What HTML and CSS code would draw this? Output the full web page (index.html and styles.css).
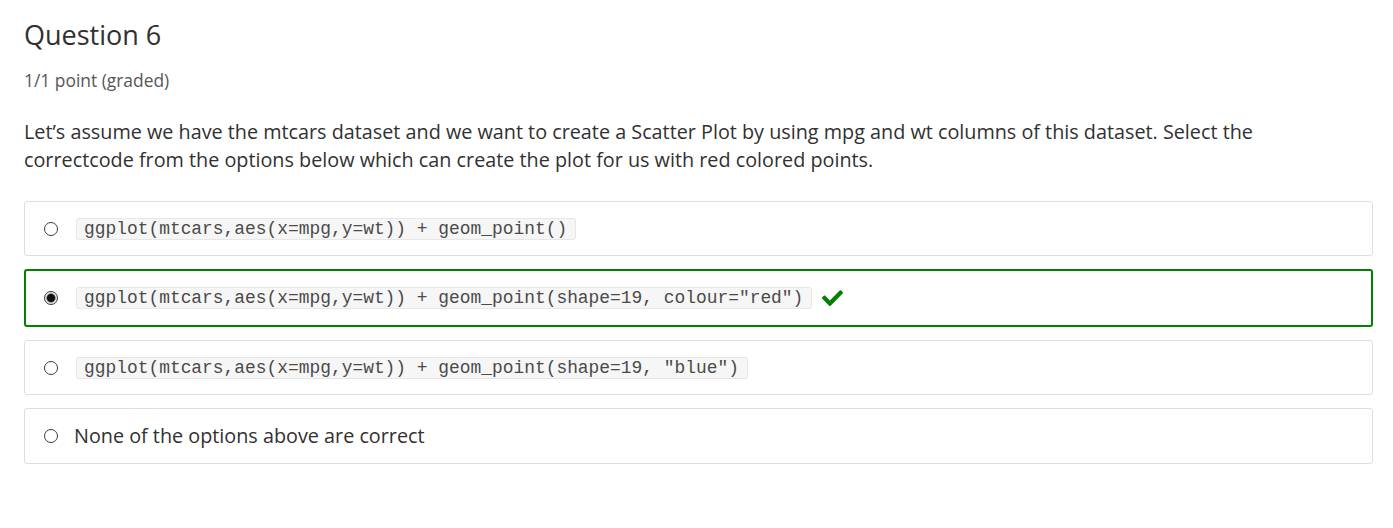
FILE: index.html
```html
<!DOCTYPE html>
<html>
<head>
<meta charset="utf-8">
<link rel="stylesheet" href="styles.css">
</head>
<body>
<div class="problem">
  <h3 class="title">Question 6</h3>
  <div class="points">1/1 point (graded)</div>
  <p class="prompt">Let’s assume we have the mtcars dataset and we want to create a Scatter Plot by using mpg and wt columns of this dataset. Select the correctcode from the options below which can create the plot for us with red colored points.</p>
  <div class="choices">
    <label class="choice">
      <span class="radio"></span>
      <code class="code">ggplot(mtcars,aes(x=mpg,y=wt)) + geom_point()</code>
    </label>
    <label class="choice correct">
      <span class="radio checked"></span>
      <code class="code">ggplot(mtcars,aes(x=mpg,y=wt)) + geom_point(shape=19, colour="red")</code>
      <svg class="check" width="21" height="16" viewBox="0 0 512 390" aria-hidden="true"><path fill="#008100" d="M173.9 381.4L7.5 215c-10-10-10-26.2 0-36.2l36.2-36.2c10-10 26.2-10 36.2 0L192 254.6 432.1 14.5c10-10 26.2-10 36.2 0l36.2 36.2c10 10 10 26.2 0 36.2L210.1 381.4c-10 10-26.2 10-36.2 0z"/></svg>
    </label>
    <label class="choice">
      <span class="radio"></span>
      <code class="code">ggplot(mtcars,aes(x=mpg,y=wt)) + geom_point(shape=19, "blue")</code>
    </label>
    <label class="choice plain">
      <span class="radio"></span>
      <span class="text">None of the options above are correct</span>
    </label>
  </div>
</div>
</body>
</html>
```

FILE: styles.css
```css
html, body {
  margin: 0;
  padding: 0;
  background: #fff;
}
body {
  font-family: "Open Sans", "Noto Sans", sans-serif;
  color: #313131;
}
.problem {
  padding: 17px 20px 0 24px;
}
.title {
  margin: 0;
  font-size: 27px;
  font-weight: 400;
  line-height: 36px;
  color: #313131;
}
.points {
  margin-top: 15px;
  font-size: 17.4px;
  line-height: 24px;
  color: #575757;
}
.prompt {
  margin: 26px 0 0 0;
  max-width: 1300px;
  font-size: 19.8px;
  line-height: 28px;
  color: #313131;
}
.choices {
  margin-top: 27px;
  display: flex;
  flex-direction: column;
  gap: 13px;
}
.choice {
  display: flex;
  align-items: center;
  border: 1px solid #dedede;
  border-radius: 3px;
  padding: 16px 19px 15px;
  min-height: 22px;
}
.choice.correct {
  border: 2px solid #008100;
  padding: 16px 18px;
}
.choice.plain {
  padding: 16px 19px;
}
.radio {
  width: 12px;
  height: 12px;
  border: 1px solid #3c3c3c;
  border-radius: 50%;
  background: #fff;
  flex: none;
  margin-right: 18px;
  box-sizing: content-box;
}
.radio.checked {
  background: radial-gradient(circle, #111 0 3.6px, #6b6b6b 4.2px, #e6e6e6 5px);
}
.choice.plain .radio {
  margin-right: 16px;
}
.code {
  font-family: "Liberation Mono", "Courier New", monospace;
  font-size: 17.9px;
  line-height: 20px;
  color: #4a4a4a;
  background: #f6f6f6;
  border: 1px solid #e7e7e7;
  border-radius: 3px;
  padding: 0 8px 0 7px;
  white-space: pre;
}
.check {
  margin-left: 10px;
  flex: none;
}
.text {
  font-size: 19.8px;
  line-height: 22px;
  color: #313131;
}
```
